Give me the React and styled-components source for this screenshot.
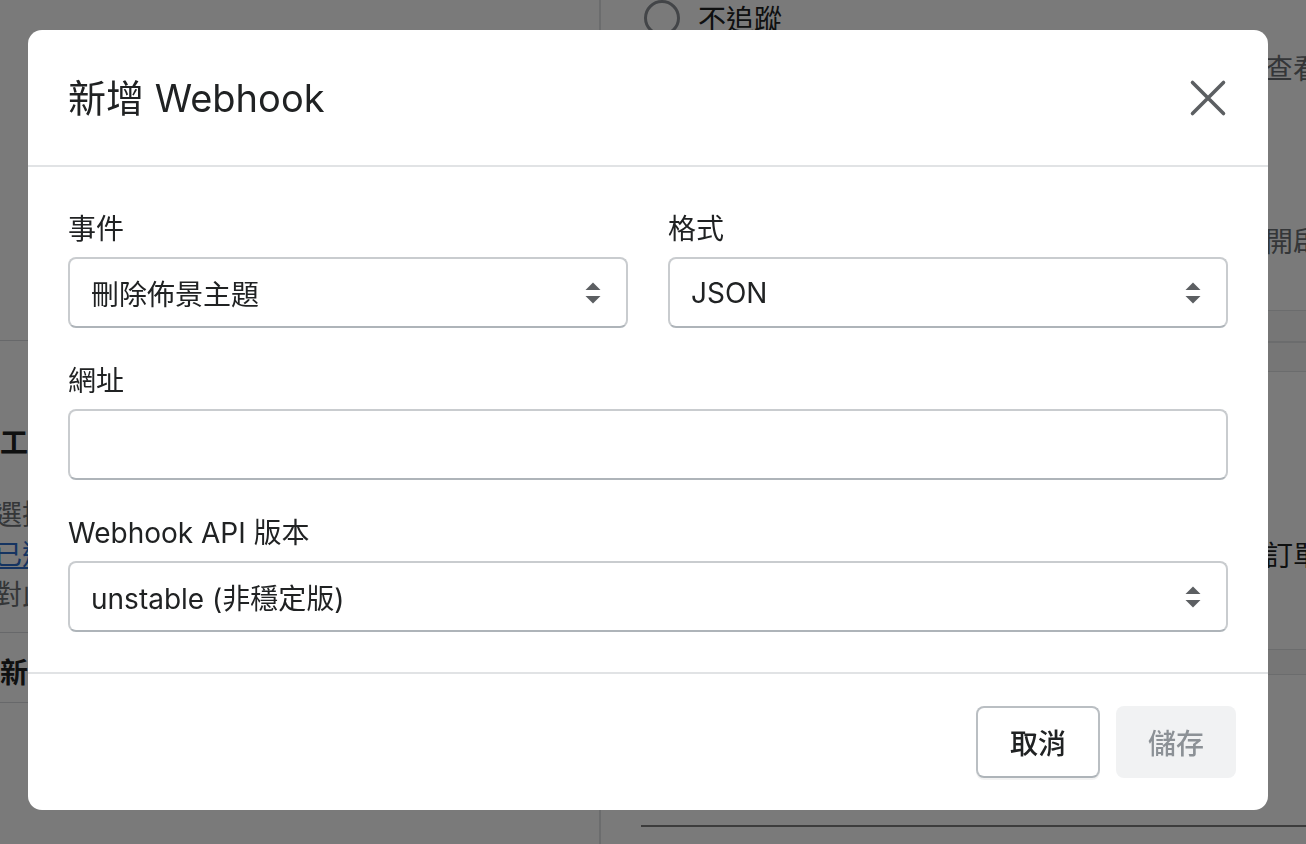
import React from 'react';
import styled, { createGlobalStyle } from 'styled-components';

const Global = createGlobalStyle`
  *, *::before, *::after { box-sizing: border-box; }
  html, body { margin: 0; padding: 0; width: 1306px; height: 844px; overflow: hidden; }
  body {
    font-family: Inter, "Noto Sans CJK TC", "Noto Sans", sans-serif;
    background: #ffffff;
    color: #202223;
  }
`;

/* ---------- page behind the dialog ---------- */
const Page = styled.div`
  display: grid;
  grid-template-columns: 601px 1fr;
  height: 844px;
  overflow: hidden;
`;

const LeftColumn = styled.div`
  display: flex;
  flex-direction: column;
  border-right: 2px solid #dfe1e3;
  overflow: hidden;
`;

const TopBlock = styled.div`
  height: 341px;
  border-bottom: 1px solid #d8dadd;
`;

const Section = styled.div`
  display: flex;
  flex-direction: column;
  padding: 82px 0 17px 0;
  margin-left: -6px;
  border-bottom: 1px solid #d8dadd;
  white-space: nowrap;
`;

const SectionTitle = styled.div`
  font-size: 28px;
  font-weight: 700;
  line-height: 40px;
  margin-left: 6px;
  margin-bottom: 32px;
`;

const SectionText = styled.div`
  font-size: 28px;
  line-height: 40px;
  color: ${(p) => (p.$link ? '#2c6ecb' : '#6d7175')};
  text-decoration: ${(p) => (p.$link ? 'underline' : 'none')};
`;

const ButtonRow = styled.div`
  height: 70px;
  display: flex;
  align-items: center;
  font-size: 28px;
  font-weight: 600;
  white-space: nowrap;
  border-bottom: 1px solid #d8dadd;
  padding-top: 6px;
`;

const RightColumn = styled.div`
  display: flex;
  flex-direction: column;
  overflow: hidden;
`;

const RadioRow = styled.div`
  display: flex;
  align-items: center;
  gap: 18px;
  height: 36px;
  padding-left: 43px;
  font-size: 28px;
  white-space: nowrap;
`;

const RadioCircle = styled.span`
  width: 36px;
  height: 36px;
  border-radius: 50%;
  border: 3px solid #8c9196;
  flex: none;
`;

const Trail = styled.div`
  margin-left: 664px;
  margin-top: ${(p) => p.$top}px;
  font-size: 28px;
  line-height: 40px;
  white-space: nowrap;
  color: ${(p) => (p.$strong ? '#202223' : '#6d7175')};
`;

const Band = styled.div`
  margin-top: ${(p) => p.$top}px;
  height: ${(p) => p.$h}px;
  background: #f6f6f7;
  border-top: 1px solid #dfe1e3;
  border-bottom: 1px solid #dfe1e3;
`;

const DarkRule = styled.div`
  margin-top: ${(p) => p.$top}px;
  margin-left: 40px;
  height: 2px;
  background: #7d7d7d;
`;

/* ---------- dialog ---------- */
const Backdrop = styled.div`
  position: fixed;
  inset: 0;
  background: rgba(0, 0, 0, 0.52);
`;

const Dialog = styled.div`
  position: fixed;
  top: 30px;
  left: 28px;
  width: 1240px;
  height: 780px;
  background: #ffffff;
  border-radius: 14px;
  display: flex;
  flex-direction: column;
  overflow: hidden;
`;

const Header = styled.div`
  height: 137px;
  flex: none;
  display: flex;
  align-items: center;
  justify-content: space-between;
  padding: 0 40px;
  border-bottom: 2px solid #e1e3e5;
`;

const Title = styled.h2`
  margin: 0;
  font-size: 38px;
  font-weight: 400;
  line-height: 48px;
  color: #202223;
`;

const CloseButton = styled.button`
  width: 40px;
  height: 40px;
  padding: 0;
  border: none;
  background: transparent;
  display: flex;
  align-items: center;
  justify-content: center;
  cursor: pointer;
`;

const Body = styled.div`
  flex: none;
  padding: 42px 40px 40px;
  display: flex;
  flex-direction: column;
  gap: 33px;
  border-bottom: 2px solid #e1e3e5;
`;

const Row = styled.div`
  display: grid;
  grid-template-columns: 1fr 1fr;
  gap: 40px;
`;

const Field = styled.div`
  display: flex;
  flex-direction: column;
`;

const Label = styled.label`
  font-size: 28px;
  line-height: 40px;
  margin-bottom: 8px;
  color: #202223;
`;

const Control = styled.div`
  height: 71px;
  border: 2px solid #c9cccf;
  border-bottom-color: #aeb4b9;
  border-radius: 8px;
  display: flex;
  align-items: center;
  justify-content: space-between;
  padding: 0 25px 0 21px;
  font-size: 28px;
  color: #202223;
  background: #ffffff;
`;

const Footer = styled.div`
  flex: 1;
  display: flex;
  align-items: center;
  justify-content: flex-end;
  gap: 16px;
  padding: 0 32px 0;
`;

const Button = styled.button`
  height: 72px;
  padding: 0 32px;
  border-radius: 8px;
  font-family: inherit;
  font-size: 28px;
  font-weight: 500;
  border: ${(p) => (p.$primary ? 'none' : '2px solid #babfc3')};
  border-bottom-color: ${(p) => (p.$primary ? 'transparent' : '#aeb4b9')};
  background: ${(p) => (p.$primary ? '#f1f2f3' : '#ffffff')};
  color: ${(p) => (p.$primary ? '#8c9196' : '#202223')};
  box-shadow: ${(p) => (p.$primary ? 'none' : '0 2px 0 rgba(0,0,0,0.05)')};
`;

const SelectArrows = () => (
  <svg width="16" height="22" viewBox="0 0 16 22" aria-hidden="true">
    <polygon points="0.5,8 8,0.5 15.5,8" fill="#5c5f62" />
    <polygon points="0.5,14 15.5,14 8,21.5" fill="#5c5f62" />
  </svg>
);

const CloseIcon = () => (
  <svg width="40" height="40" viewBox="0 0 40 40" aria-hidden="true">
    <path d="M4.5 4.5 L35.5 35.5 M35.5 4.5 L4.5 35.5" stroke="#5c5f62" strokeWidth="3.6" strokeLinecap="round" />
  </svg>
);

const Select = ({ value }) => (
  <Control>
    <span>{value}</span>
    <SelectArrows />
  </Control>
);

export default function App() {
  return (
    <>
      <Global />
      <Page>
        <LeftColumn>
          <TopBlock />
          <Section>
            <SectionTitle>工設</SectionTitle>
            <SectionText>選擇</SectionText>
            <SectionText $link>已選</SectionText>
            <SectionText>對此</SectionText>
          </Section>
          <ButtonRow>新增</ButtonRow>
        </LeftColumn>
        <RightColumn>
          <RadioRow>
            <RadioCircle />
            <span>不追蹤</span>
          </RadioRow>
          <Trail $top={13}>查看</Trail>
          <Trail $top={133}>開啟</Trail>
          <Band $top={48} $h={32} />
          <Band $top={0} $h={30} />
          <Trail $top={164} $strong>訂單</Trail>
          <Band $top={73} $h={26} />
          <DarkRule $top={150} />
        </RightColumn>
      </Page>
      <Backdrop />
      <Dialog role="dialog">
        <Header>
          <Title>新增 Webhook</Title>
          <CloseButton aria-label="關閉">
            <CloseIcon />
          </CloseButton>
        </Header>
        <Body>
          <Row>
            <Field>
              <Label>事件</Label>
              <Select value="刪除佈景主題" />
            </Field>
            <Field>
              <Label>格式</Label>
              <Select value="JSON" />
            </Field>
          </Row>
          <Field>
            <Label>網址</Label>
            <Control />
          </Field>
          <Field>
            <Label>Webhook API 版本</Label>
            <Select value="unstable (非穩定版)" />
          </Field>
        </Body>
        <Footer>
          <Button>取消</Button>
          <Button $primary>儲存</Button>
        </Footer>
      </Dialog>
    </>
  );
}
